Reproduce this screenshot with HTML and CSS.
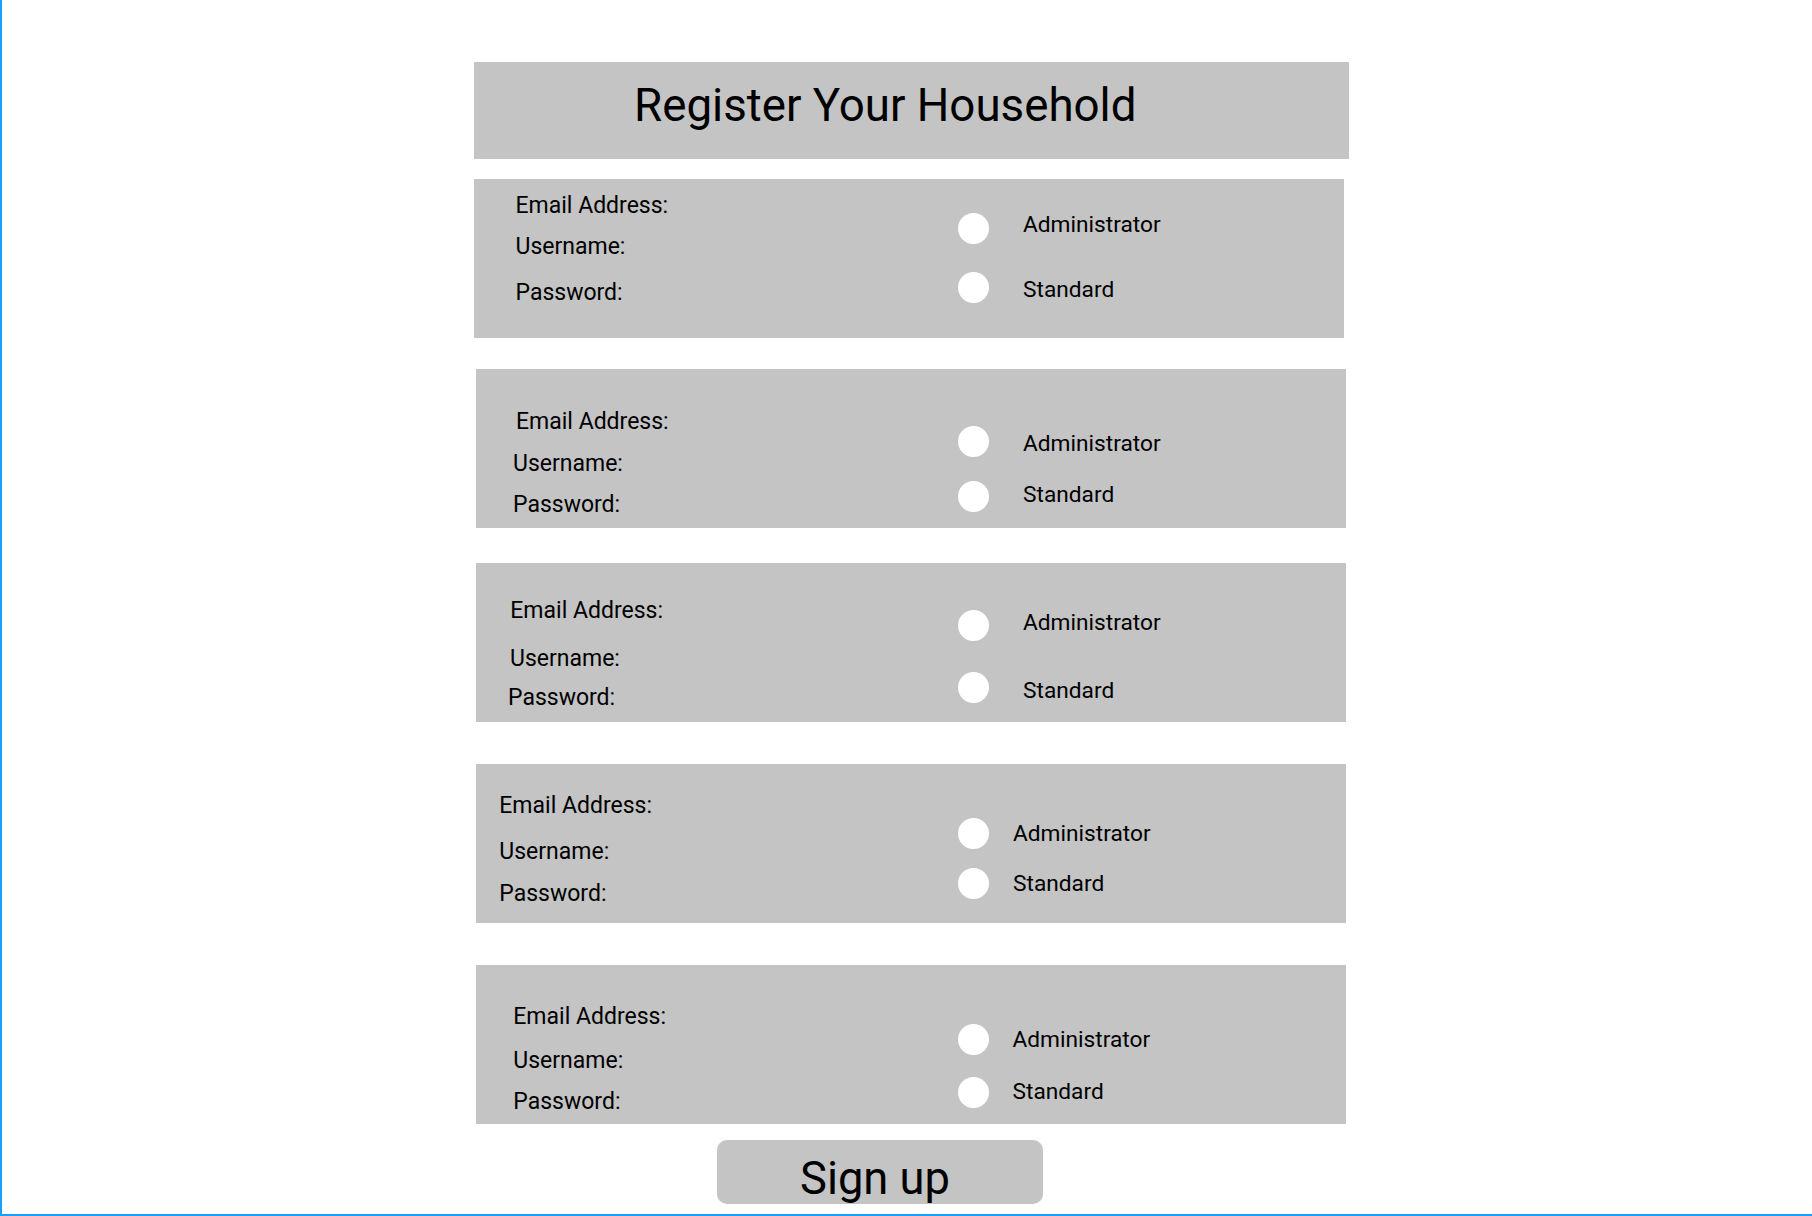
FILE: index.html
```html
<!DOCTYPE html>
<html lang="en">
<head>
<meta charset="utf-8">
<title>Register Your Household</title>
<link rel="stylesheet" href="styles.css">
</head>
<body>
<div class="page">
  <header class="title-bar"><h1 class="title">Register Your Household</h1></header>

  <section class="card card--1">
    <div class="fields">
      <div class="label">Email Address:</div>
      <div class="label">Username:</div>
      <div class="label">Password:</div>
    </div>
    <div class="roles">
      <div class="role"><span class="radio"></span><span class="role-name">Administrator</span></div>
      <div class="role"><span class="radio"></span><span class="role-name">Standard</span></div>
    </div>
  </section>

  <section class="card card--2">
    <div class="fields">
      <div class="label">Email Address:</div>
      <div class="label">Username:</div>
      <div class="label">Password:</div>
    </div>
    <div class="roles">
      <div class="role"><span class="radio"></span><span class="role-name">Administrator</span></div>
      <div class="role"><span class="radio"></span><span class="role-name">Standard</span></div>
    </div>
  </section>

  <section class="card card--3">
    <div class="fields">
      <div class="label">Email Address:</div>
      <div class="label">Username:</div>
      <div class="label">Password:</div>
    </div>
    <div class="roles">
      <div class="role"><span class="radio"></span><span class="role-name">Administrator</span></div>
      <div class="role"><span class="radio"></span><span class="role-name">Standard</span></div>
    </div>
  </section>

  <section class="card card--4">
    <div class="fields">
      <div class="label">Email Address:</div>
      <div class="label">Username:</div>
      <div class="label">Password:</div>
    </div>
    <div class="roles">
      <div class="role"><span class="radio"></span><span class="role-name">Administrator</span></div>
      <div class="role"><span class="radio"></span><span class="role-name">Standard</span></div>
    </div>
  </section>

  <section class="card card--5">
    <div class="fields">
      <div class="label">Email Address:</div>
      <div class="label">Username:</div>
      <div class="label">Password:</div>
    </div>
    <div class="roles">
      <div class="role"><span class="radio"></span><span class="role-name">Administrator</span></div>
      <div class="role"><span class="radio"></span><span class="role-name">Standard</span></div>
    </div>
  </section>

  <button class="signup" type="button">Sign up</button>
</div>
</body>
</html>
```

FILE: styles.css
```css
html {
  margin: 0;
  background: #ffffff;
}

body {
  margin: 0;
  height: 1216px;
  box-sizing: border-box;
  border-left: 2px solid #18a0fb;
  border-bottom: 2px solid #18a0fb;
  overflow: hidden;
  font-family: Roboto, "Liberation Sans", sans-serif;
  color: #000000;
  background: #ffffff;
}

.page {
  display: flex;
  flex-direction: column;
  align-items: flex-start;
  padding: 62px 0 0 472px;
}

.title-bar {
  width: 875px;
  height: 97px;
  box-sizing: border-box;
  background: #c4c4c4;
  padding: 19px 0 0 160px;
}

.title {
  margin: 0;
  font-size: 45.7px;
  font-weight: 400;
  line-height: 50px;
  white-space: nowrap;
}

/* ---------- cards ---------- */
.card {
  display: flex;
  width: 870px;
  height: 159px;
  box-sizing: border-box;
  background: #c4c4c4;
}

.fields {
  flex: none;
  width: var(--rx);
  padding-top: var(--f1);
  box-sizing: border-box;
  display: flex;
  flex-direction: column;
}

.label {
  font-size: 23px;
  line-height: 24px;
  white-space: nowrap;
}

.label:nth-child(1) { margin-left: var(--x1); }
.label:nth-child(2) { margin-left: var(--x2); margin-top: var(--f2); }
.label:nth-child(3) { margin-left: var(--x3); margin-top: var(--f3); }

.roles {
  display: flex;
  flex-direction: column;
  padding-top: var(--r1);
  gap: var(--r2);
}

.role {
  display: flex;
  align-items: center;
  height: 31px;
  gap: var(--rg);
}

.radio {
  flex: none;
  width: 31px;
  height: 31px;
  border-radius: 50%;
  background: #ffffff;
}

.role-name {
  font-size: 22.7px;
  line-height: 24px;
  white-space: nowrap;
}

.role:nth-child(1) .role-name { margin-top: calc(var(--t1) * 2); }
.role:nth-child(2) .role-name { margin-top: calc(var(--t2) * 2); }

.card--1 {
  margin-top: 20px;
  --rx: 484px;
  --x1: 41.5px; --x2: 41.5px; --x3: 41.5px;
  --f1: 15px; --f2: 16.5px; --f3: 22.3px;
  --r1: 33.5px; --r2: 28.7px; --rg: 34px;
  --t1: -3.3px; --t2: 2.4px;
}

.card--2 {
  margin: 31px 0 0 2px;
  --rx: 482px;
  --x1: 40px; --x2: 37px; --x3: 37px;
  --f1: 40.7px; --f2: 17.9px; --f3: 17.1px;
  --r1: 57.3px; --r2: 23.5px; --rg: 34px;
  --t1: 2.4px; --t2: -1.6px;
}

.card--3 {
  margin: 35px 0 0 2px;
  --rx: 482px;
  --x1: 34.3px; --x2: 34px; --x3: 32px;
  --f1: 35.6px; --f2: 24.7px; --f3: 14.5px;
  --r1: 47px; --r2: 31.2px; --rg: 34px;
  --t1: -3px; --t2: 3.6px;
}

.card--4 {
  margin: 42px 0 0 2px;
  --rx: 482px;
  --x1: 23.3px; --x2: 23.3px; --x3: 23.3px;
  --f1: 30.3px; --f2: 21.6px; --f3: 17.9px;
  --r1: 53.5px; --r2: 19.7px; --rg: 24px;
  --t1: 0.8px; --t2: 0.3px;
}

.card--5 {
  margin: 42px 0 0 2px;
  --rx: 482px;
  --x1: 37.3px; --x2: 37.3px; --x3: 37.3px;
  --f1: 39.6px; --f2: 20.7px; --f3: 16.7px;
  --r1: 58.7px; --r2: 22.1px; --rg: 23.5px;
  --t1: 0.5px; --t2: -0.3px;
}

/* ---------- button ---------- */
.signup {
  margin: 16px 0 0 243px;
  width: 326px;
  height: 64px;
  box-sizing: border-box;
  padding: 13px 0 0 83px;
  border: none;
  border-radius: 10px;
  background: #c4c4c4;
  color: #000000;
  font-family: Roboto, "Liberation Sans", sans-serif;
  font-size: 45.3px;
  line-height: 51px;
  text-align: left;
  display: flex;
  align-items: flex-start;
  cursor: pointer;
}
```
